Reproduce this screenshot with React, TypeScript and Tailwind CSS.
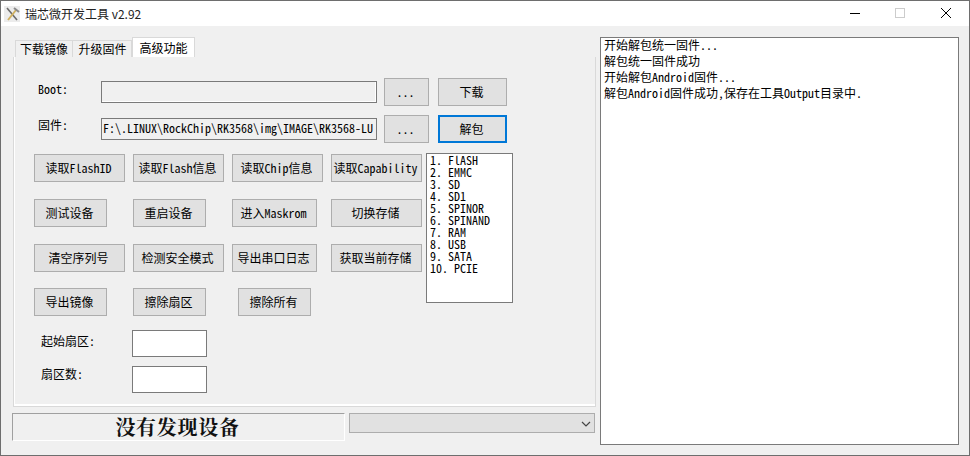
const mono = "font-['Noto_Sans_Mono_CJK_SC','Liberation_Mono','Noto_Sans_CJK_SC',monospace]";

function Btn({ children, w, focus }: { children: React.ReactNode; w: string; focus?: boolean }) {
  return (
    <button
      className={`${w} h-[28px] shrink-0 bg-[#e1e1e1] text-[12px] text-black flex items-center justify-center pr-[2px] ${
        focus ? 'border-2 border-[#0078d7]' : 'border border-[#adadad]'
      }`}
    >
      {children}
    </button>
  );
}

const rows = [
  [['读取FlashID', 'w-[91px]'], ['读取Flash信息', 'w-[91px]'], ['读取Chip信息', 'w-[91px]'], ['读取Capability', 'w-[91px]']],
  [['测试设备', 'w-[73px]'], ['重启设备', 'w-[73px]'], ['进入Maskrom', 'w-[85px]'], ['切换存储', 'w-[91px]']],
  [['清空序列号', 'w-[91px]'], ['检测安全模式', 'w-[91px]'], ['导出串口日志', 'w-[85px]'], ['获取当前存储', 'w-[91px]']],
];

const storage = ['1. FlASH', '2. EMMC', '3. SD', '4. SD1', '5. SPINOR', '6. SPINAND', '7. RAM', '8. USB', '9. SATA', '10. PCIE'];

const logs = ['开始解包统一固件...', '解包统一固件成功', '开始解包Android固件...', '解包Android固件成功,保存在工具Output目录中.'];

export default function App() {
  return (
    <div className={`w-[970px] h-[456px] flex flex-col bg-[#f0f0f0] border border-[#6e6e6e] text-[12px] text-black overflow-hidden ${mono}`}>
      {/* title bar */}
      <div className="h-[25px] shrink-0 bg-white flex items-center font-['Noto_Sans_CJK_SC',sans-serif]">
        <svg width="16" height="16" viewBox="0 0 16 16" className="ml-[3px]">
          <rect width="16" height="16" fill="#ececec" />
          <path d="M3 2 L13 14" stroke="#6b6b6b" strokeWidth="1.6" />
          <path d="M12 4 L4 14" stroke="#d0b060" strokeWidth="2" />
          <path d="M10 2 L15 6" stroke="#8a8a8a" strokeWidth="2" />
        </svg>
        <span className="ml-[5px] text-[12px] text-[#222]">瑞芯微开发工具 v2.92</span>
        <div className="ml-auto flex items-center">
          <svg width="46" height="25" viewBox="0 0 46 25"><path d="M19 12.5h10" stroke="#000" /></svg>
          <svg width="46" height="25" viewBox="0 0 46 25"><rect x="18.5" y="7.5" width="9" height="9" fill="none" stroke="#ccc" /></svg>
          <svg width="46" height="25" viewBox="0 0 46 25"><path d="M18 7l10 10M28 7l-10 10" stroke="#000" /></svg>
        </div>
      </div>

      <div className="flex-1 flex pt-[11px] pl-[11px] pr-[10px]">
        {/* left column */}
        <div className="w-[584px] shrink-0 flex flex-col">
          <div className="flex h-[20px] pl-[3px] font-['Noto_Sans_CJK_SC',sans-serif]">
            <div className="w-[58px] border border-b-0 border-[#d9d9d9] bg-[#f0f0f0] mt-[3px] flex items-center justify-center">下载镜像</div>
            <div className="w-[59px] pl-[1px] border-t border-r border-[#d9d9d9] bg-[#f0f0f0] mt-[3px] flex items-center justify-center">升级固件</div>
            <div className="w-[63px] border border-b-0 border-[#d9d9d9] bg-white flex items-center justify-center">高级功能</div>
          </div>
          <div className="w-[583px] ml-px h-[350px] border border-t-0 border-[#d9d9d9] shadow-[inset_1px_0_0_#fff,inset_0_-2px_0_#fff] flex flex-col">
            <div className="flex items-center mt-[21px] h-[28px]">
              <span className="w-[63px] ml-[24px] mb-[7px] shrink-0 text-[12px]">Boot:</span>
              <div className="w-[276px] h-[22px] border border-[#7a7a7a] bg-[#f0f0f0] shadow-[inset_-1px_-1px_0_#fff]" />
              <div className="ml-[7px]"><Btn w="w-[45px]">...</Btn></div>
              <div className="ml-[9px]"><Btn w="w-[69px]">下载</Btn></div>
            </div>
            <div className="flex items-center mt-[9px] h-[28px]">
              <span className="w-[63px] ml-[24px] mb-[8px] shrink-0">固件:</span>
              <div className="w-[276px] h-[22px] border border-[#7a7a7a] bg-[#f0f0f0] pl-[1px] leading-[17px] whitespace-nowrap overflow-hidden">F:\.LINUX\RockChip\RK3568\img\IMAGE\RK3568-LU</div>
              <div className="ml-[7px]"><Btn w="w-[45px]">...</Btn></div>
              <div className="ml-[9px]"><Btn w="w-[69px]" focus>解包</Btn></div>
            </div>

            <div className="flex mt-[11px] ml-[20px]">
              <div className="w-[392px] flex flex-col">
                {rows.map((row, i) => (
                  <div key={i} className="grid grid-cols-[99px_99px_99px_91px] h-[28px] mt-[17px] first:mt-0">
                    {row.map(([label, w]) => (
                      <Btn key={label} w={w}>{label}</Btn>
                    ))}
                  </div>
                ))}
                <div className="grid grid-cols-[99px_105px_73px] h-[28px] mt-[16px]">
                  <Btn w="w-[73px]">导出镜像</Btn>
                  <Btn w="w-[73px]">擦除扇区</Btn>
                  <Btn w="w-[73px]">擦除所有</Btn>
                </div>
              </div>
              <div className="-mt-px w-[87px] h-[150px] border border-[#7a7a7a] bg-white pl-[3px] leading-[12px] whitespace-pre">
                {storage.map(s => <div key={s}>{s}</div>)}
              </div>
            </div>

            <div className="flex items-center mt-[14px] ml-[27px]">
              <span className="w-[91px] mb-[6px]">起始扇区:</span>
              <div className="w-[75px] h-[27px] border border-[#7a7a7a] bg-white" />
            </div>
            <div className="flex items-center mt-[8px] ml-[27px]">
              <span className="w-[91px] mb-[10px]">扇区数:</span>
              <div className="w-[75px] h-[27px] border border-[#7a7a7a] bg-white" />
            </div>
          </div>

          <div className="flex mt-[6px]">
            <div className="w-[333px] h-[28px] pr-[2px] border-t border-l border-[#a0a0a0] border-r border-b border-r-white border-b-white text-center font-['Noto_Serif_CJK_SC','Liberation_Serif',serif] font-bold text-[20px] tracking-[0.7px] leading-[25px] text-[#111]">没有发现设备</div>
            <div className="ml-[4px] w-[246px] h-[20px] bg-[#e1e1e1] border border-[#adadad] flex items-center justify-end pr-[3px]">
              <svg width="10" height="6" viewBox="0 0 10 6" className="mt-[2px]"><path d="M1 1l4 4 4-4" fill="none" stroke="#444" strokeWidth="1.2" /></svg>
            </div>
          </div>
        </div>

        {/* log */}
        <div className="ml-[4px] w-[359px] h-[408px] border border-[#7a7a7a] bg-white pl-[3px] leading-[16px]">
          <div className="-mt-px">
            {logs.map(l => <div key={l}>{l}</div>)}
          </div>
        </div>
      </div>
    </div>
  );
}
